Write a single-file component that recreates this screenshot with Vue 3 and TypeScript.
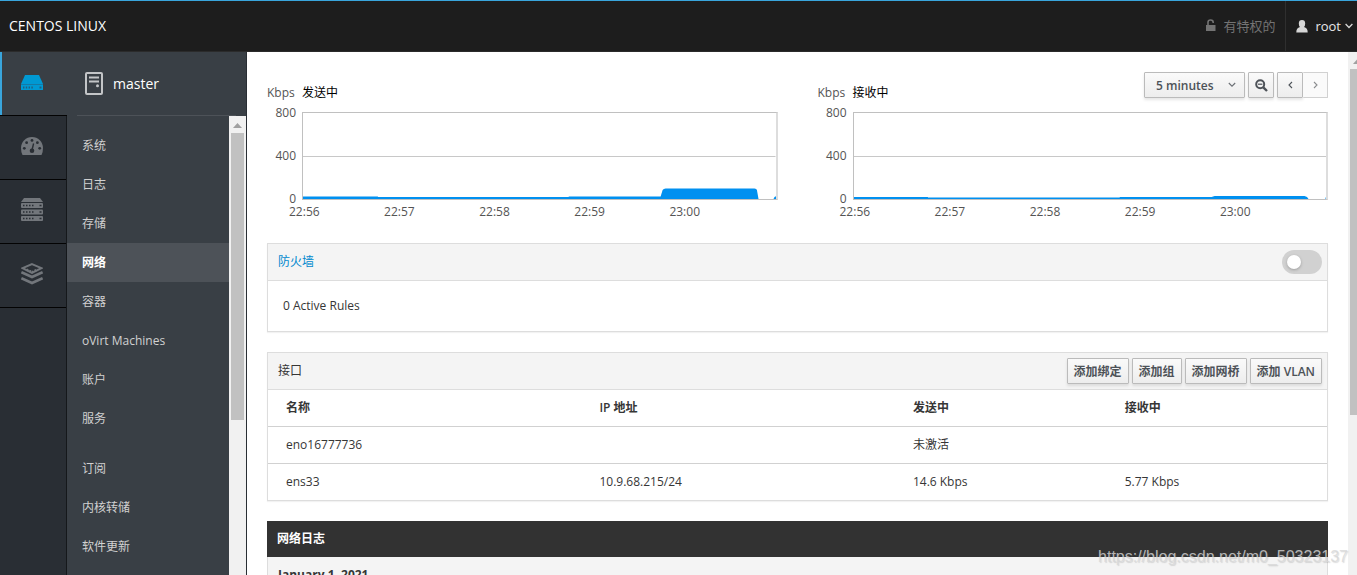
<script setup lang="ts">
import { ref } from 'vue'

interface MenuItem { label: string; active?: boolean }
interface Chart { title: string; area: string }
interface Nic { name: string; ip: string; tx: string; rx: string }

const menuGroups: MenuItem[][] = [
  [
    { label: '系统' },
    { label: '日志' },
    { label: '存储' },
    { label: '网络', active: true },
    { label: '容器' },
    { label: 'oVirt Machines' },
    { label: '账户' },
    { label: '服务' },
  ],
  [{ label: '订阅' }, { label: '内核转储' }, { label: '软件更新' }],
]

const charts: Chart[] = [
  {
    title: '发送中',
    area: 'M0 86V83.6H75V84H266V83.6H358L360 77Q361 75.4 363 75.4H452Q454 75.4 454.4 77L456 86ZM471 86L472 84L474 83V86Z',
  },
  {
    title: '接收中',
    area: 'M0 86V84H74V84.5H266V84H358L361 83H451Q454 83.4 455 86ZM472 86V84.4H474V86Z',
  },
]
const yTicks = ['800', '400', '0']
const xTicks = ['22:56', '22:57', '22:58', '22:59', '23:00']

const ranges = ['5 minutes', '1 hour', '6 hours', '1 day', '1 week']
const range = ref('5 minutes')
const firewallOn = ref(false)

const addButtons = ['添加绑定', '添加组', '添加网桥', '添加 VLAN']
const nics: Nic[] = [
  { name: 'eno16777736', ip: '', tx: '未激活', rx: '' },
  { name: 'ens33', ip: '10.9.68.215/24', tx: '14.6 Kbps', rx: '5.77 Kbps' },
]
</script>

<template>
  <div class="page">
    <header class="topbar">
      <span class="brand">CENTOS LINUX</span>
      <button class="privileged" type="button">
        <svg width="12" height="12" viewBox="0 0 12 12" aria-hidden="true">
          <path d="M1 6H10.5V12H1Z" fill="currentColor" />
          <path d="M3 6V3.2Q3 1 5.6 1Q8.2 1 8.2 3.4V4" fill="none" stroke="currentColor" stroke-width="1.6" />
        </svg>
        有特权的
      </button>
      <button class="user" type="button">
        <svg width="12" height="13" viewBox="0 0 12 13" aria-hidden="true">
          <path d="M6 0Q9.2 0 9.2 3.4Q9.2 5.6 8 7Q11.7 7.8 11.7 12.4H.3Q.3 7.8 4 7Q2.8 5.6 2.8 3.4Q2.8 0 6 0Z" fill="#d6d6d6" />
        </svg>
        <span>root</span>
        <svg class="caret" width="8" height="6" viewBox="0 0 8 6" aria-hidden="true">
          <path d="M.6 1L4 4.5L7.4 1" fill="none" stroke="#d6d6d6" stroke-width="1.3" />
        </svg>
      </button>
    </header>

    <div class="body">
      <nav class="rail" aria-label="Sections">
        <a class="rail-item active" href="#machine" aria-label="Machine">
          <svg width="22" height="15" viewBox="0 0 22 15">
            <path d="M4 0H18L22 9H0Z" fill="#0099d3" />
            <path d="M0 10H22V14.5Q22 15 21.5 15H.5Q0 15 0 14.5Z" fill="#0099d3" />
            <path d="M2 12.5H13" stroke="#24607c" stroke-width="2" stroke-dasharray="1.4 1.4" />
            <path d="M18.5 12.5H20.5" stroke="#24607c" stroke-width="2" />
            <path d="M0 9.5H22" stroke="#1579a5" />
          </svg>
        </a>
        <a class="rail-item" href="#dashboard" aria-label="Dashboard">
          <svg width="22" height="18" viewBox="0 0 22 18">
            <path d="M11 0C17 0 22 4.8 22 11Q22 15 20.5 18H1.5Q0 15 0 11C0 4.8 5 0 11 0Z" fill="#72767b" />
            <g fill="#292e34">
              <circle cx="11" cy="3.4" r="1.4" /><circle cx="5.6" cy="5.7" r="1.4" /><circle cx="16.4" cy="5.7" r="1.4" />
              <circle cx="3.3" cy="11.3" r="1.4" /><circle cx="18.7" cy="11.3" r="1.4" /><circle cx="11" cy="13.8" r="2.3" />
            </g>
            <path d="M11 13L12.6 6.5" stroke="#292e34" stroke-width="1.4" />
          </svg>
        </a>
        <a class="rail-item" href="#cluster" aria-label="Cluster">
          <svg width="22" height="23" viewBox="0 0 22 23">
            <g fill="#72767b">
              <path d="M3 0H19L22 4H0Z" /><rect y="5" width="22" height="5" rx="1" />
              <rect y="11.5" width="22" height="5" rx="1" /><rect y="18" width="22" height="5" rx="1" />
            </g>
            <g stroke="#292e34" stroke-width="1.5">
              <path d="M2 7.5H13M2 14H13M2 20.5H13" stroke-dasharray="1.5 1.5" />
              <path d="M18.5 7.5H20.5M18.5 14H20.5M18.5 20.5H20.5" />
            </g>
          </svg>
        </a>
        <a class="rail-item" href="#images" aria-label="Images">
          <svg width="22" height="22" viewBox="0 0 22 22">
            <g fill="none" stroke="#72767b">
              <path d="M11 1.2L20.4 5.2L11 10L1.6 5.2Z" stroke-width="2" />
              <path d="M5.5 6.6L11 9.2L16.5 6.6" stroke-width="2.4" stroke-dasharray="1.8 1.2" />
              <path d="M.4 9.2L11 14L21.6 9.2" stroke-width="2.6" />
              <path d="M.4 15.2L11 20L21.6 15.2" stroke-width="2.6" />
            </g>
          </svg>
        </a>
      </nav>

      <aside class="sidebar">
        <a class="host" href="#master">
          <svg width="18" height="23" viewBox="0 0 18 23" aria-hidden="true">
            <rect x="1" y="1" width="16" height="21" rx="1" fill="none" stroke="#c3c5c7" stroke-width="2" />
            <path d="M4 5.5H14M4 9.5H14" stroke="#c3c5c7" stroke-width="2" />
            <circle cx="12.5" cy="13.7" r="1.5" fill="#c3c5c7" />
          </svg>
          <span>master</span>
        </a>
        <div class="menu-area">
          <nav class="menu" aria-label="Host">
            <ul v-for="(group, g) in menuGroups" :key="g">
              <li v-for="item in group" :key="item.label">
                <a href="#network" :class="{ active: item.active }">{{ item.label }}</a>
              </li>
            </ul>
          </nav>
          <div class="scroll" aria-hidden="true">
            <svg width="9" height="5" viewBox="0 0 9 5"><path d="M0 5L4.5 0L9 5Z" fill="#a0a0a0" /></svg>
            <i class="thumb"></i>
          </div>
        </div>
      </aside>

      <main class="content">
        <section class="charts">
          <figure v-for="(chart, i) in charts" :key="chart.title" class="chart">
            <figcaption>
              <span class="unit">Kbps</span>
              <span class="title">{{ chart.title }}</span>
              <div v-if="i === 1" class="tools">
                <div class="select">
                  <select v-model="range" aria-label="Time range">
                    <option v-for="r in ranges" :key="r">{{ r }}</option>
                  </select>
                  <svg width="8" height="6" viewBox="0 0 8 6" aria-hidden="true">
                    <path d="M.8 1L4 4.2L7.2 1" fill="none" stroke="#6b6f74" stroke-width="1.1" />
                  </svg>
                </div>
                <button class="btn icon" type="button" aria-label="Zoom out">
                  <svg width="13" height="13" viewBox="0 0 13 13">
                    <circle cx="5.2" cy="5.2" r="4" fill="none" stroke="#4d5258" stroke-width="2" />
                    <path d="M3 5.2H7.4" stroke="#4d5258" stroke-width="1.2" />
                    <path d="M8.3 8.3L12 12" stroke="#4d5258" stroke-width="2.4" />
                  </svg>
                </button>
                <div class="pager">
                  <button class="btn icon" type="button" aria-label="Earlier">
                    <svg width="5" height="8" viewBox="0 0 5 8"><path d="M4 1L1 4L4 7" fill="none" stroke="#4d5258" stroke-width="1.1" /></svg>
                  </button>
                  <button class="btn icon off" type="button" aria-label="Later" disabled>
                    <svg width="5" height="8" viewBox="0 0 5 8"><path d="M1 1L4 4L1 7" fill="none" stroke="#8b8d8f" stroke-width="1.1" /></svg>
                  </button>
                </div>
              </div>
            </figcaption>
            <div class="plot-row">
              <div class="y-axis"><span v-for="t in yTicks" :key="t">{{ t }}</span></div>
              <div class="plot">
                <svg viewBox="0 0 473 86" preserveAspectRatio="none" aria-hidden="true">
                  <path d="M0 43.5H473" stroke="#c8c8c8" />
                  <path :d="chart.area" fill="#0090f0" />
                </svg>
              </div>
            </div>
            <div class="x-axis"><span v-for="t in xTicks" :key="t">{{ t }}</span></div>
          </figure>
        </section>

        <section class="panel">
          <div class="panel-head">
            <a href="#firewall">防火墙</a>
            <input v-model="firewallOn" class="switch" type="checkbox" role="switch" aria-label="防火墙" />
          </div>
          <div class="panel-body">0 Active Rules</div>
        </section>

        <section class="panel">
          <div class="panel-head">
            <span>接口</span>
            <div class="actions">
              <button v-for="b in addButtons" :key="b" class="btn" type="button">{{ b }}</button>
            </div>
          </div>
          <table>
            <colgroup><col class="c-name" /><col class="c-ip" /><col class="c-tx" /><col /></colgroup>
            <thead>
              <tr><th>名称</th><th>IP 地址</th><th>发送中</th><th>接收中</th></tr>
            </thead>
            <tbody>
              <tr v-for="n in nics" :key="n.name">
                <td>{{ n.name }}</td><td>{{ n.ip }}</td><td>{{ n.tx }}</td><td>{{ n.rx }}</td>
              </tr>
            </tbody>
          </table>
        </section>

        <section class="log">
          <h2>网络日志</h2>
          <h3>January 1, 2021</h3>
        </section>
      </main>

      <div class="scroll outer" aria-hidden="true">
        <svg width="9" height="5" viewBox="0 0 9 5"><path d="M0 5L4.5 0L9 5Z" fill="#a0a0a0" /></svg>
        <i class="thumb"></i>
      </div>
    </div>
    <div class="watermark">https://blog.csdn.net/m0_50323137</div>
  </div>
</template>

<style>
body { margin: 0; }
</style>

<style scoped>
.page, .page * { box-sizing: border-box; }
.page {
  position: relative;
  display: flex;
  flex-direction: column;
  height: 100vh;
  overflow: hidden;
  font: 12px/18px "Open Sans", "Noto Sans CJK SC", sans-serif;
  color: #363636;
  background: #fff;
}
.page button, .page select { font-family: inherit; }
a { color: inherit; text-decoration: none; }
svg { display: block; flex: none; }

.topbar {
  display: flex;
  align-items: stretch;
  flex: none;
  height: 52px;
  border-top: 1px solid #39a5dc;
  border-bottom: 1px solid #2b2b2b;
  background: #1d1d1d;
  color: #fff;
}
.brand { margin: 0 auto 0 9px; font-size: 14px; line-height: 50px; }
.topbar button {
  display: flex;
  align-items: center;
  border: 0;
  background: none;
  color: #e8e8e8;
  font-size: 13px;
}
.topbar .privileged { gap: 6px; padding: 0 10px 2px; color: #737373; }
.topbar .user { gap: 7px; padding: 0 4px 0 10px; border-left: 1px solid #2f2f2f; }
.caret { margin-left: -3px; }

.body { display: flex; flex: 1; min-height: 0; }
.rail { flex: none; width: 67px; background: #292e34; border-right: 1px solid #15181b; }
.rail-item {
  display: flex;
  align-items: center;
  justify-content: center;
  height: 64px;
  padding: 0 2px 4px 0;
  border-bottom: 1px solid #030303;
}
.rail-item.active {
  width: 67px;
  padding: 0 3px 2px 0;
  background: #393f45;
  box-shadow: inset 2px 0 #39a5dc;
}

.sidebar {
  display: flex;
  flex-direction: column;
  flex: none;
  width: 180px;
  border-right: 1px solid #292e34;
  background: #393f45;
}
.host {
  display: flex;
  align-items: center;
  flex: none;
  gap: 10px;
  height: 64px;
  margin: 0 10px;
  padding-left: 8px;
  border-bottom: 1px solid #4d5258;
  color: #fff;
  font-size: 14px;
}
.menu-area { display: flex; flex: 1; min-height: 0; }
.menu { flex: 1; padding-top: 10px; overflow: hidden; }
.menu ul { margin: 0 0 11px; padding: 0; list-style: none; }
.menu a { display: block; padding-left: 15px; line-height: 39px; color: #d1d1d1; }
.menu a.active { background: #4d5258; color: #fff; font-weight: 700; }

.scroll {
  display: flex;
  flex-direction: column;
  align-items: center;
  flex: none;
  width: 17px;
  padding-top: 7px;
  background: #f1f1f1;
}
.scroll .thumb { width: 13px; height: 287px; margin-top: 5px; background: #c1c1c1; }
.scroll.outer { align-items: flex-start; width: 9px; padding-left: 2px; overflow: hidden; }
.scroll.outer svg { margin-left: 3px; }
.scroll.outer .thumb { height: 346px; }

.content { flex: 1; min-width: 0; padding: 20px; overflow: hidden; }
.charts { display: grid; grid-template-columns: 1fr 1fr; gap: 40px; margin-bottom: 25px; }
.chart { margin: 0; min-width: 0; color: #545454; }
figcaption { display: flex; align-items: flex-end; height: 30px; }
.unit { width: 35px; }
.title { color: #000; }
.tools { display: flex; align-self: flex-start; gap: 3px; margin-left: auto; }
.plot-row { display: flex; height: 103px; }
.y-axis {
  display: flex;
  flex-direction: column;
  justify-content: space-between;
  width: 35px;
  padding: 5px 6px 0 0;
  line-height: 12px;
  text-align: right;
}
.plot {
  flex: 1;
  height: 88px;
  margin-top: 10px;
  border: 1px solid #c0c0c0;
  border-right: 2px solid #ddd;
}
.plot svg { width: 100%; height: 100%; }
.x-axis {
  display: grid;
  grid-template-columns: repeat(5, 1fr);
  margin: 1px 13px 0 22px;
  line-height: 12px;
}

.btn {
  height: 26px;
  padding: 0 6px;
  border: 1px solid #bbb;
  border-radius: 1px;
  background: linear-gradient(#fafafa, #ededed);
  box-shadow: 0 2px 3px rgba(3, 3, 3, 0.1);
  color: #4d5258;
  font-size: 12px;
  font-weight: 600;
  white-space: nowrap;
}
.btn.icon { display: flex; align-items: center; justify-content: center; width: 26px; padding: 0; }
.btn.off { width: 25px; border-color: #d1d1d1; border-left: 0; background: #fafafa; box-shadow: none; }
.pager { display: flex; }
.select { display: flex; align-items: center; position: relative; }
.select select {
  appearance: none;
  width: 101px;
  height: 26px;
  padding: 0 11px;
  border: 1px solid #bbb;
  border-radius: 1px;
  background: linear-gradient(#fafafa, #ededed);
  box-shadow: 0 2px 3px rgba(3, 3, 3, 0.1);
  color: #4d5258;
  font-size: 12px;
  font-weight: 600;
}
.select svg { position: absolute; right: 9px; pointer-events: none; }

.panel { margin-bottom: 20px; border: 1px solid #ddd; box-shadow: 0 1px 1px rgba(0, 0, 0, 0.05); }
.panel-head {
  display: flex;
  align-items: center;
  justify-content: space-between;
  height: 37px;
  padding: 0 5px 0 10px;
  border-bottom: 1px solid #ddd;
  background: #f4f4f4;
}
.panel-head a { color: #0088ce; }
.panel-body { padding: 16px 15px; }
.actions { display: flex; gap: 3px; }
.switch {
  appearance: none;
  display: flex;
  align-items: center;
  width: 40px;
  height: 24px;
  margin: 0;
  padding: 0 5px;
  border-radius: 12px;
  background: #d1d1d1;
}
.switch::before {
  content: "";
  width: 14px;
  height: 14px;
  border-radius: 50%;
  background: #fff;
  box-shadow: 0 1px 3px rgba(0, 0, 0, 0.25);
}
.switch:checked { justify-content: flex-end; background: #39a5dc; }

table { width: 100%; border-collapse: collapse; table-layout: fixed; }
.c-name, .c-ip { width: 29.6%; }
.c-tx { width: 20%; }
th, td { height: 37px; padding: 0 18px; text-align: left; }
th { height: 36px; font-weight: 600; }
tbody tr { border-top: 1px solid #d1d1d1; }

.log { border: 1px solid #ddd; border-top: 0; background: #f4f4f4; }
.log h2, .log h3 { margin: 0; padding: 0 10px; font-size: 12px; line-height: 36px; }
.log h2 { margin: 0 -1px; background: #323232; color: #fff; font-weight: 600; }
.log h3 { font-weight: 700; }

.watermark {
  position: absolute;
  right: 9px;
  bottom: 8px;
  color: rgba(215, 215, 215, 0.8);
  font: 16px/20px "Liberation Sans", sans-serif;
  text-shadow: 1px 1px 1px rgba(120, 120, 120, 0.25);
  pointer-events: none;
}
</style>
